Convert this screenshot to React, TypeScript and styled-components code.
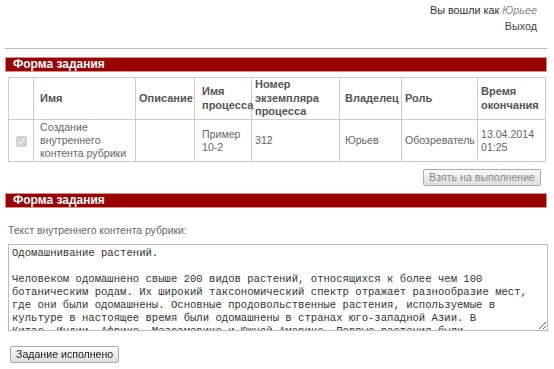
import React from "react";
import styled, { createGlobalStyle } from "styled-components";

const Global = createGlobalStyle`
  html, body { margin: 0; padding: 0; background: #fff; }
  body { font-family: "Liberation Sans", Arial, sans-serif; font-size: 10.5px; color: #333; }
`;

const Page = styled.div`
  width: 554px;
  height: 369px;
  overflow: hidden;
  display: flex;
  flex-direction: column;
`;

const UserBox = styled.div`
  display: flex;
  flex-direction: column;
  align-items: flex-end;
  padding: 2px 17px 0 0;
  line-height: 16px;
  font-size: 10.8px;
  color: #333;
`;

const UserName = styled.em`
  color: #888;
`;

const LogoutLink = styled.a`
  color: #444;
  text-decoration: none;
`;

const Divider = styled.div`
  margin: 14px 7px 0 5px;
  border-top: 1px solid #bbb;
  height: 0;
`;

const Section = styled.section<{ $top: number }>`
  margin: ${(p) => p.$top}px 7px 0 5px;
  display: flex;
  flex-direction: column;
`;

const TitleBar = styled.h2`
  margin: 0;
  height: 13px;
  line-height: 13px;
  background: #990000;
  border: 1px solid #d98c8c;
  color: #fff;
  font-size: 12px;
  font-weight: bold;
  padding: 0 7px;
`;

const Table = styled.table`
  margin: 5px 0 0 3px;
  width: 537px;
  border-collapse: collapse;
  table-layout: fixed;
  font-size: 10.6px;
  color: #666;
`;

const Th = styled.th<{ $pad?: number }>`
  border: 1px solid #ccc;
  text-align: left;
  vertical-align: middle;
  font-weight: bold;
  font-size: 11px;
  line-height: 13.5px;
  color: #555;
  padding: 0 1px 0 ${(p) => p.$pad ?? 3}px;
  height: 41px;
`;

const Td = styled.td<{ $pad?: number }>`
  border: 1px solid #ccc;
  text-align: left;
  vertical-align: middle;
  line-height: 13px;
  padding: 1px 1px 1px ${(p) => p.$pad ?? 3}px;
  height: 38px;
`;

const CheckCell = styled.td`
  border: 1px solid #ccc;
  text-align: center;
  vertical-align: middle;
  padding: 0;
`;

const Check = styled.input`
  width: 11px;
  height: 11px;
  margin: 0;
  vertical-align: middle;
`;

const Actions = styled.div`
  display: flex;
  justify-content: flex-end;
  padding: 7px 6px 0 0;
`;

const Button = styled.button<{ $disabledLook?: boolean }>`
  font-family: "Liberation Sans", Arial, sans-serif;
  font-size: 10.6px;
  height: 17px;
  line-height: 13px;
  padding: 0 5px;
  border: 1px solid #aaa;
  border-radius: 2px;
  background: linear-gradient(#fbfbfb, #dedede);
  color: ${(p) => (p.$disabledLook ? "#888" : "#222")};
`;

const Label = styled.div`
  margin: 16px 0 0 3px;
  color: #666;
  font-size: 10.4px;
  line-height: 14px;
`;

const TextArea = styled.textarea`
  margin: 6px 0 0 3px;
  width: 540px;
  height: 87px;
  box-sizing: border-box;
  border: 1px solid #bbb;
  padding: 2px 0 0 3px;
  font-family: "Liberation Mono", "Courier New", monospace;
  font-size: 10.6px;
  line-height: 13px;
  color: #333;
  resize: both;
  white-space: pre;
  overflow-x: hidden;
  overflow-y: scroll;
  background: #fff;
`;

const Footer = styled.div`
  padding: 15px 0 0 10px;
`;

const text = `Одомашнивание растений.

Человеком одомашнено свыше 200 видов растений, относящихся к более чем 100
ботаническим родам. Их широкий таксономический спектр отражает разнообразие мест,
где они были одомашнены. Основные продовольственные растения, используемые в
культуре в настоящее время были одомашнены в странах юго-западной Азии. В
Китае, Индии, Африке, Мезоамерике и Южной Америке. Первые растения были
одомашнены около 10 тысяч лет назад.`;

export default function App() {
  return (
    <Page>
      <Global />
      <UserBox>
        <span>
          Вы вошли как <UserName>Юрьее</UserName>
        </span>
        <LogoutLink href="#">Выход</LogoutLink>
      </UserBox>
      <Divider />
      <Section $top={8}>
        <TitleBar>Форма задания</TitleBar>
        <Table>
          <colgroup>
            <col style={{ width: 25 }} />
            <col style={{ width: 102 }} />
            <col style={{ width: 59 }} />
            <col style={{ width: 57 }} />
            <col style={{ width: 88 }} />
            <col style={{ width: 62 }} />
            <col style={{ width: 76 }} />
            <col style={{ width: 68 }} />
          </colgroup>
          <thead>
            <tr>
              <Th />
              <Th $pad={6}>Имя</Th>
              <Th $pad={3}>Описание</Th>
              <Th $pad={7}>Имя процесса</Th>
              <Th $pad={3}>Номер экземпляра процесса</Th>
              <Th $pad={5}>Владелец</Th>
              <Th $pad={3}>Роль</Th>
              <Th $pad={3}>Время окончания</Th>
            </tr>
          </thead>
          <tbody>
            <tr>
              <CheckCell>
                <Check type="checkbox" checked disabled readOnly />
              </CheckCell>
              <Td $pad={6}>Создание внутреннего контента рубрики</Td>
              <Td $pad={3} />
              <Td $pad={7}>Пример 10-2</Td>
              <Td $pad={3}>312</Td>
              <Td $pad={5}>Юрьев</Td>
              <Td $pad={3}>Обозреватель</Td>
              <Td $pad={3}>13.04.2014 01:25</Td>
            </tr>
          </tbody>
        </Table>
        <Actions>
          <Button $disabledLook>Взять на выполнение</Button>
        </Actions>
      </Section>
      <Section $top={7}>
        <TitleBar>Форма задания</TitleBar>
        <Label>Текст внутреннего контента рубрики:</Label>
        <TextArea defaultValue={text} />
      </Section>
      <Footer>
        <Button>Задание исполнено</Button>
      </Footer>
    </Page>
  );
}
